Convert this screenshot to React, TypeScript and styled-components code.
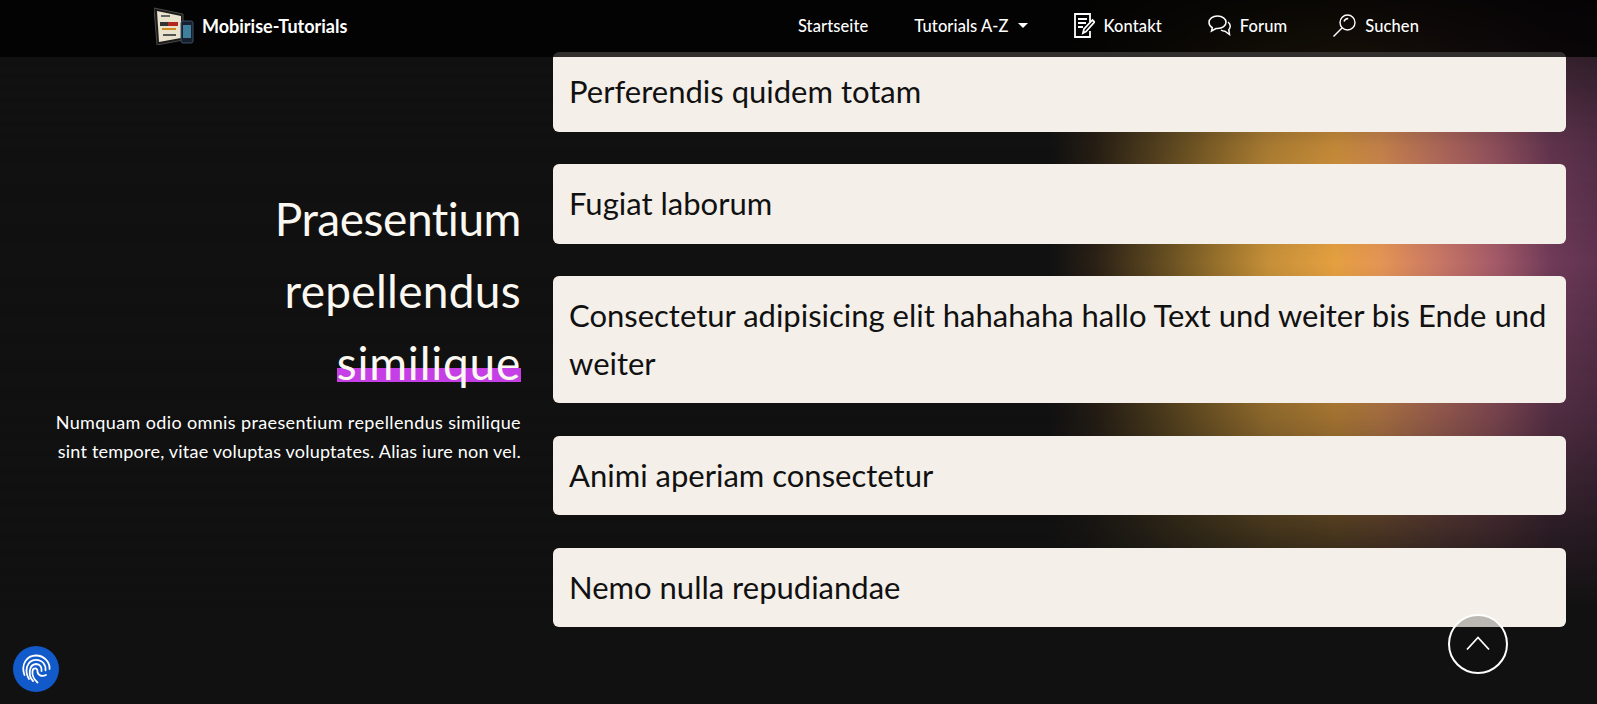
import React from "react";
import styled, { createGlobalStyle } from "styled-components";

const Global = createGlobalStyle`
  html, body { margin: 0; padding: 0; background: #111; overflow: hidden; }
  * { box-sizing: border-box; }
`;

const FONT = `"Lato", "Noto Sans", sans-serif`;

const Page = styled.div`
  position: relative;
  width: 1597px;
  height: 704px;
  overflow: hidden;
  font-family: ${FONT};
  font-variant-ligatures: none;
  background: #111;
`;

const maskStops = `linear-gradient(180deg,
  rgba(0,0,0,.15) 0px, rgba(0,0,0,.4) 58px, rgba(0,0,0,.83) 147px, #000 262px,
  rgba(0,0,0,.67) 418px, rgba(0,0,0,.27) 531px, transparent 610px)`;

const Glow = styled.div`
  position: absolute;
  inset: 0;
  background: linear-gradient(90deg,
    #111 1050px, #2a2015 1095px, #5a451f 1152px, #8f6b2a 1209px, #c58f38 1267px,
    #e5a040 1335px, #e49555 1381px, #c97765 1438px, #a55a68 1495px, #6f3a58 1552px, #5f3350 1597px);
  -webkit-mask-image: ${maskStops};
  mask-image: ${maskStops};
`;

const Nav = styled.header`
  position: absolute;
  inset: 0 0 auto 0;
  height: 57px;
  z-index: 5;
  background: rgba(0,0,0,.8);
  display: flex;
  align-items: center;
  padding: 0 178px 6px 154px;
  justify-content: space-between;
`;

const Brand = styled.div`
  display: flex;
  align-items: center;
  gap: 8px;
  color: #fff;
  font-weight: 700;
  font-size: 18px;
`;

const Menu = styled.nav`
  display: flex;
  align-items: center;
  gap: 46px;
`;

const MenuItem = styled.a<{ $gap?: number }>`
  display: flex;
  align-items: center;
  gap: ${(p) => p.$gap ?? 8}px;
  color: #fff;
  font-size: 16.500px;
  font-weight: 500;
  letter-spacing: 0.1px;
`;

const Caret = styled.span`
  width: 0;
  height: 0;
  border-left: 5.500px solid transparent;
  border-right: 5.500px solid transparent;
  border-top: 5.500px solid #fff;
`;

const Section = styled.main`
  position: relative;
  display: grid;
  grid-template-columns: 521px 1013px;
  column-gap: 32px;
  align-items: start;
  padding: 52px 0 0 0;
`;

const Intro = styled.div`
  text-align: right;
  color: #fff;
  padding-top: 131px;
`;

const Title = styled.h2`
  margin: 0;
  font-weight: 400;
  font-size: 46px;
  line-height: 72px;
  color: #fbf7f1;
`;

const TitleLine = styled.span<{ $tracking: number }>`
  display: block;
  letter-spacing: ${(p) => p.$tracking}px;
`;

const Mark = styled.span`
  display: inline-block;
  background: linear-gradient(transparent 57.500%, #c53ee6 57.500%, #c53ee6 77%, transparent 77%);
`;

const Lead = styled.p`
  margin: 9px 0 0;
  font-size: 18px;
  line-height: 28.500px;
  color: #fff;
`;

const LeadLine = styled.span<{ $tracking: number }>`
  display: block;
  letter-spacing: ${(p) => p.$tracking}px;
`;

const List = styled.div`
  display: flex;
  flex-direction: column;
  gap: 32.300px;
`;

const Card = styled.div`
  background: #f4efe9;
  border-radius: 6px;
  padding: 16px;
  font-size: 31px;
  line-height: 47.700px;
  color: #111;
`;

const Up = styled.div`
  position: absolute;
  left: 1448px;
  top: 614px;
  width: 60px;
  height: 60px;
  border-radius: 50%;
  border: 2px solid #fff;
  background: rgba(17,17,17,.25);
  display: flex;
  align-items: center;
  justify-content: center;
  padding-bottom: 3px;
`;

const Finger = styled.div`
  position: absolute;
  left: 13px;
  top: 646px;
  width: 46px;
  height: 46px;
  border-radius: 50%;
  background: #1259c9;
  display: flex;
  align-items: center;
  justify-content: center;
`;

const Logo = () => (
  <svg width="40" height="38" viewBox="0 0 40 38">
    <path d="M0 1 L29 7 L29 33 L3 38 Z" fill="#1d1b1a" stroke="#4a4a4a" />
    <path d="M3 4 L27 9 L27 31 L5 35 Z" fill="#e9e2cd" />
    <rect x="7" y="8" width="9" height="2" fill="#666" />
    <rect x="6" y="15" width="8" height="4" fill="#333" />
    <rect x="14" y="15" width="10" height="4" fill="#b3261e" />
    <rect x="8" y="21" width="14" height="2" fill="#d08a20" />
    <rect x="9" y="27" width="13" height="2" fill="#555" />
    <rect x="27" y="14" width="12" height="22" rx="2" fill="#16202e" stroke="#3d5066" />
    <rect x="29" y="18" width="8" height="13" fill="#3f7f9e" />
  </svg>
);

export default function App() {
  return (
    <Page>
      <Global />
      <Glow />
      <Nav>
        <Brand><Logo />Mobirise-Tutorials</Brand>
        <Menu>
          <MenuItem>Startseite</MenuItem>
          <MenuItem $gap={9}>Tutorials A-Z <Caret /></MenuItem>
          <MenuItem $gap={9}>
            <svg width="21" height="25" viewBox="0 0 21 25" fill="none" stroke="#fff" strokeWidth="1.800">
              <path d="M16 9V1H1v23h15v-6" /><path d="M4 6h9M4 10h8M4 14h5" /><path d="M9 20l1-4L18.500 7l2 2-8.500 9.500z" />
            </svg>
            Kontakt
          </MenuItem>
          <MenuItem $gap={8}>
            <svg width="24" height="21" viewBox="0 0 24 21" fill="none" stroke="#fff" strokeWidth="1.500">
              <path d="M9.500 1C4.500 1 1 4 1 7.500c0 2.300 1.200 4 3.300 5.200L3.500 16l4.500-2.500h1.500c5 0 8.500-2.700 8.500-6.200S14.500 1 9.500 1z" />
              <path d="M20 7c2.500 1.800 3 5.500.8 7.700l.7 4.800-4.500-3.300c-1.500 0-3-.4-4-1.200" />
            </svg>
            Forum
          </MenuItem>
          <MenuItem $gap={9}>
            <svg width="23" height="23" viewBox="0 0 23 23" fill="none" stroke="#fff" strokeWidth="1.400">
              <circle cx="14.500" cy="8.500" r="7.500" /><path d="M9 14L.5 22.500" /><path d="M11 7.500c.6-2 2-3 4.200-3" />
            </svg>
            Suchen
          </MenuItem>
        </Menu>
      </Nav>
      <Section>
        <Intro>
          <Title>
            <TitleLine $tracking={-0.45}>Praesentium</TitleLine>
            <TitleLine $tracking={0.3}>repellendus</TitleLine>
            <TitleLine $tracking={0.75}><Mark>similique</Mark></TitleLine>
          </Title>
          <Lead>
            <LeadLine $tracking={0.375}>Numquam odio omnis praesentium repellendus similique</LeadLine>
            <LeadLine $tracking={0.21}>sint tempore, vitae voluptas voluptates. Alias iure non vel.</LeadLine>
          </Lead>
        </Intro>
        <List>
          <Card>Perferendis quidem totam</Card>
          <Card>Fugiat laborum</Card>
          <Card>Consectetur adipisicing elit hahahaha hallo Text und weiter bis Ende und weiter</Card>
          <Card>Animi aperiam consectetur</Card>
          <Card>Nemo nulla repudiandae</Card>
        </List>
      </Section>
      <Up>
        <svg width="26" height="16" viewBox="0 0 26 16" fill="none" stroke="#fff" strokeWidth="1.800"><path d="M2 14.500L13 2.500l11 12" /></svg>
      </Up>
      <Finger>
        <svg width="30" height="30" viewBox="0 0 30 30" fill="none" stroke="#fff" strokeWidth="1.800" strokeLinecap="round">
          <path d="M3.500 21C-.5 10 6 1.500 15 1.500 23 1.500 29 8 28.500 15" />
          <path d="M8 25C3.500 18 5 6 15 5.800c6.500 0 10 5 9.500 10.500" />
          <path d="M12 27C7 22 7.500 10.500 15 10c4.500 0 6 3.500 5.500 7" />
          <path d="M16.500 28.500C12.500 25 11 20 11.500 17c.5-3.500 5.300-3.500 5 .5 0 3.500 4 5.500 8.500 3.500" />
        </svg>
      </Finger>
    </Page>
  );
}
